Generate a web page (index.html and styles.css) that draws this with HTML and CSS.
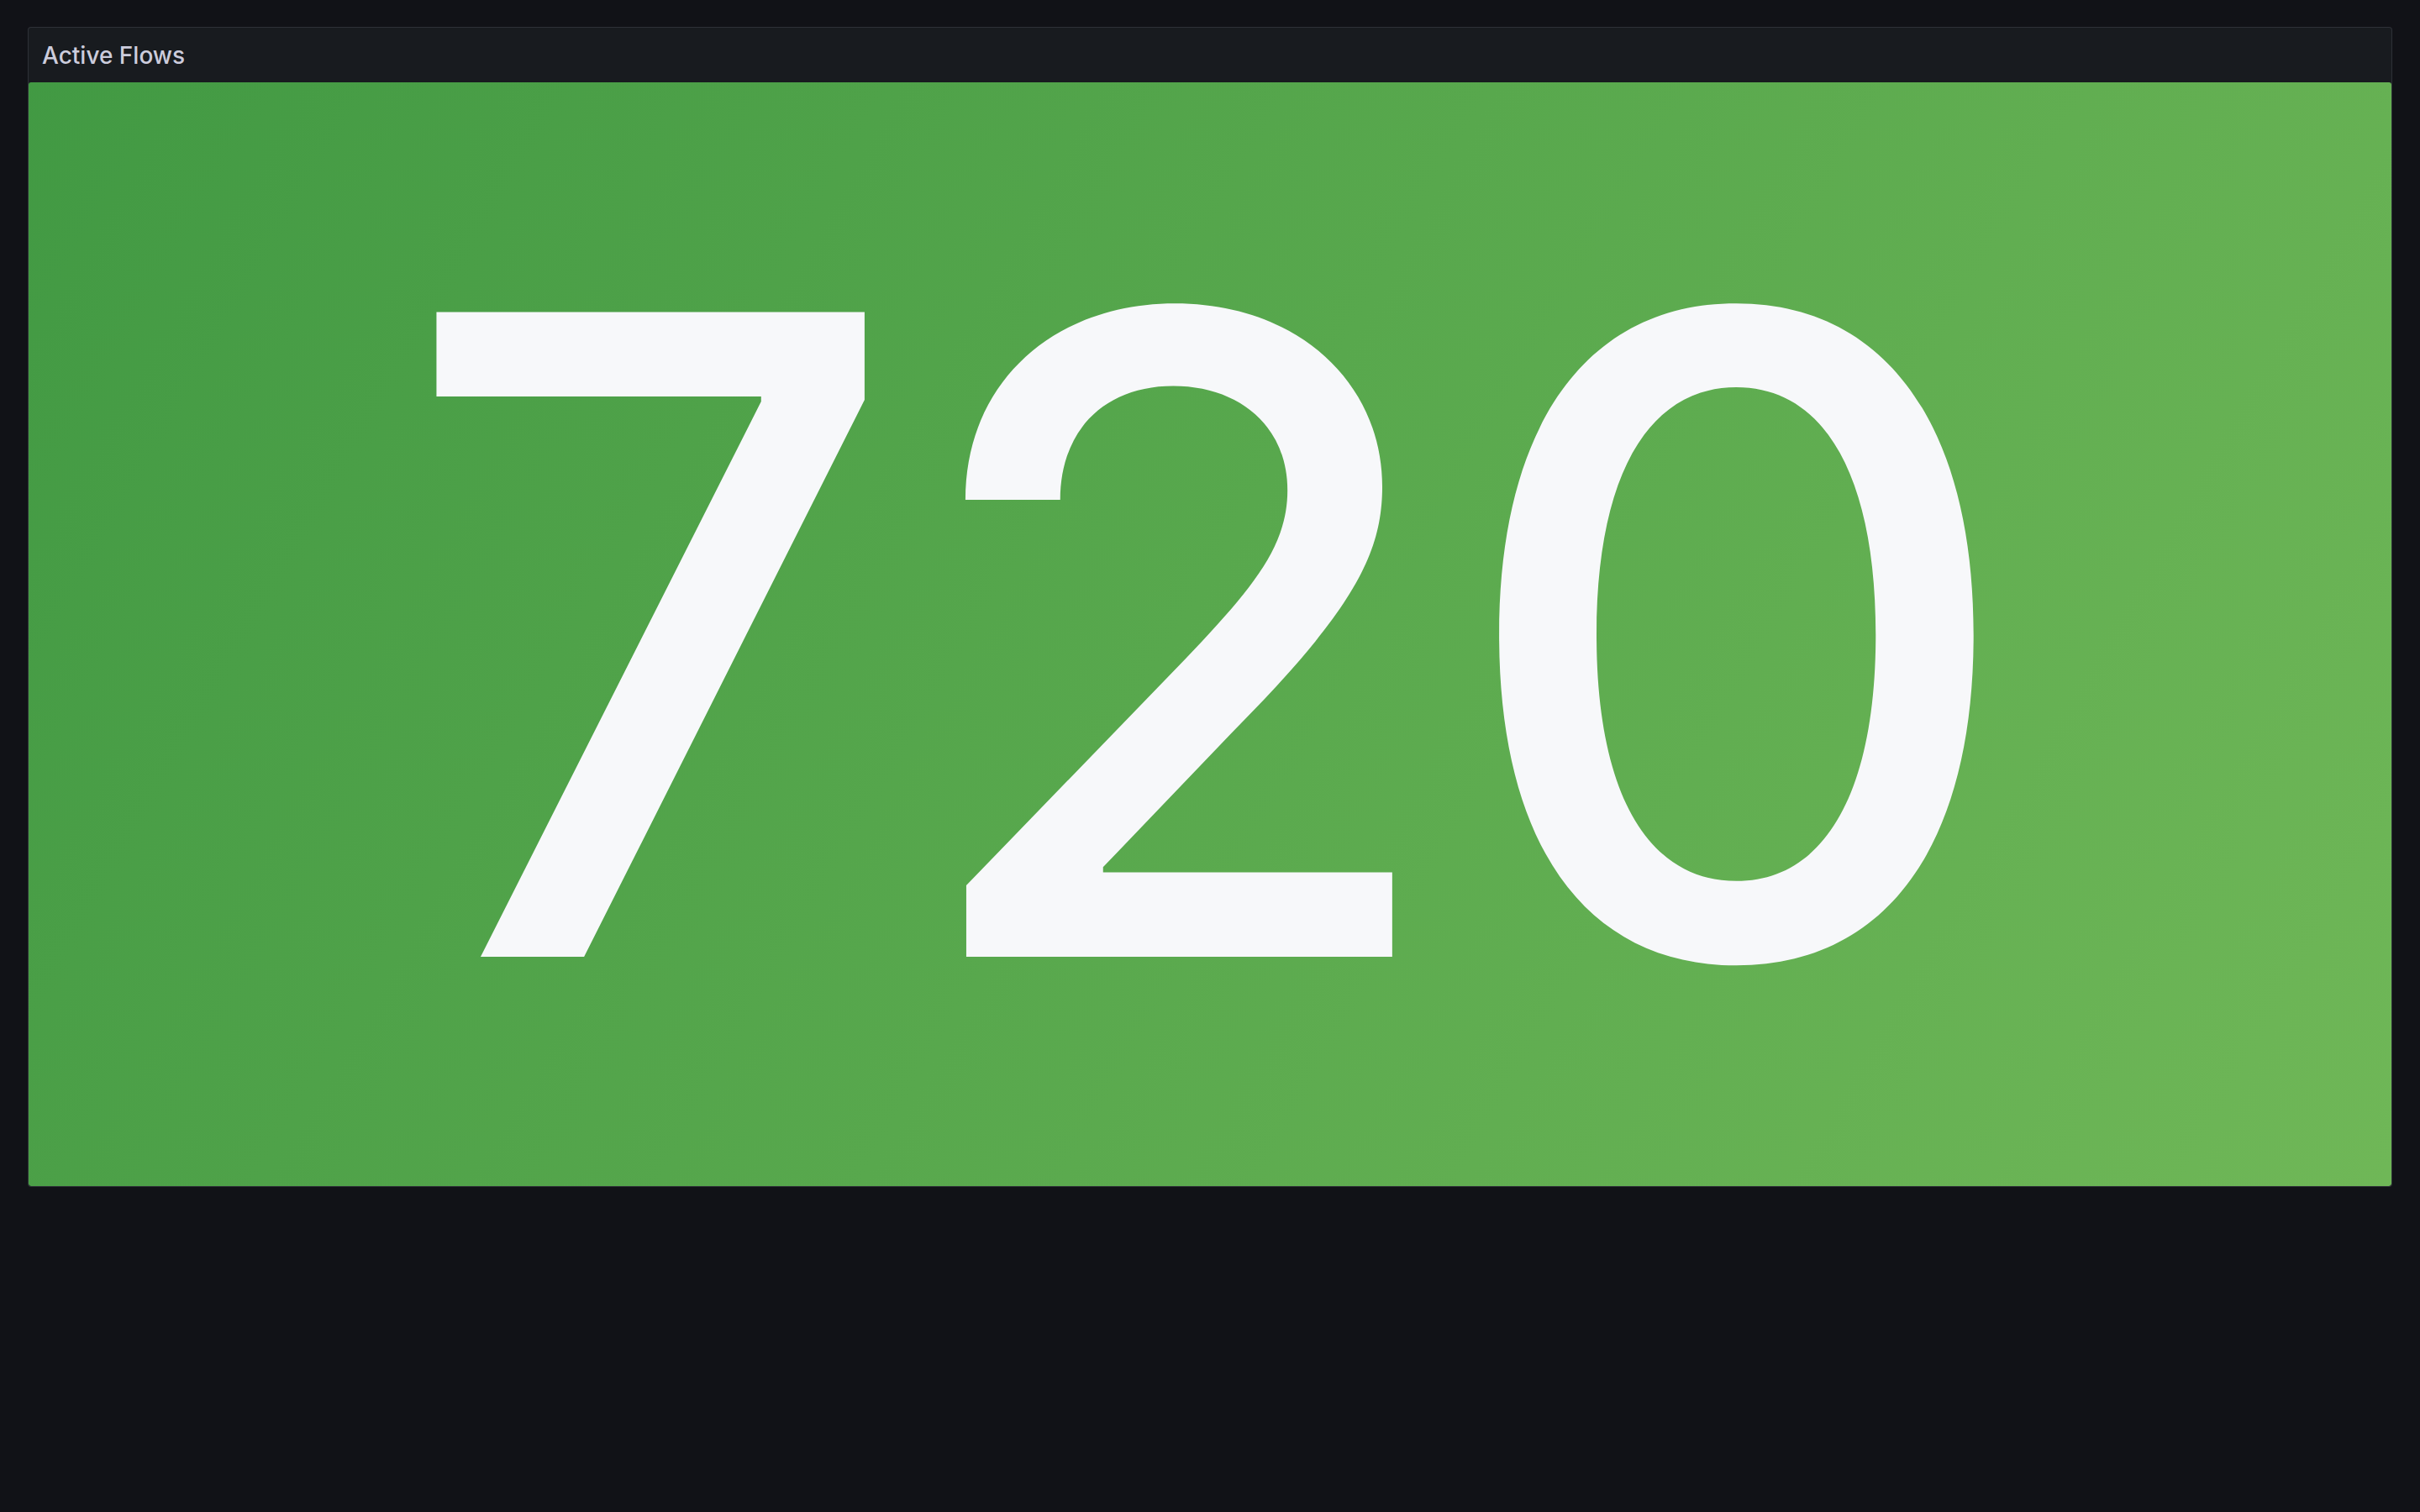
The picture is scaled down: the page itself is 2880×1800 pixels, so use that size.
FILE: index.html
```
<!DOCTYPE html>
<html lang="en">
<head>
<meta charset="utf-8">
<title>Active Flows</title>
<link rel="stylesheet" href="styles.css">
</head>
<body>
<div class="panel">
  <div class="panel-header">
    <h2 class="panel-title">Active Flows</h2>
  </div>
  <div class="panel-body">
    <span class="stat-value">720</span>
  </div>
</div>
</body>
</html>
```
FILE: styles.css
```
html, body {
  margin: 0;
  padding: 0;
  background: #111217;
  height: 100%;
}
body {
  font-family: Inter, "Noto Sans", sans-serif;
  padding: 32px 33px 0 33px;
  box-sizing: border-box;
}
.panel {
  height: 1381px;
  border: 1px solid rgba(204, 204, 220, 0.13);
  border-radius: 4px;
  background: #181b1f;
  display: flex;
  flex-direction: column;
  box-sizing: border-box;
  overflow: hidden;
}
.panel-header {
  height: 65px;
  flex: 0 0 65px;
  display: flex;
  align-items: center;
  padding: 0 16px;
}
.panel-title {
  margin: 0;
  font-size: 28px;
  font-weight: 500;
  color: #ccccdc;
  line-height: 1;
}
.panel-body {
  flex: 1;
  display: flex;
  align-items: center;
  justify-content: center;
  border-radius: 3px;
  background: linear-gradient(120deg, hsl(121, 40%, 43%), hsl(105, 40%, 53%));
}
.stat-value {
  font-size: 1055px;
  font-weight: 500;
  line-height: 1.2;
  color: #f7f8fa;
}
```
